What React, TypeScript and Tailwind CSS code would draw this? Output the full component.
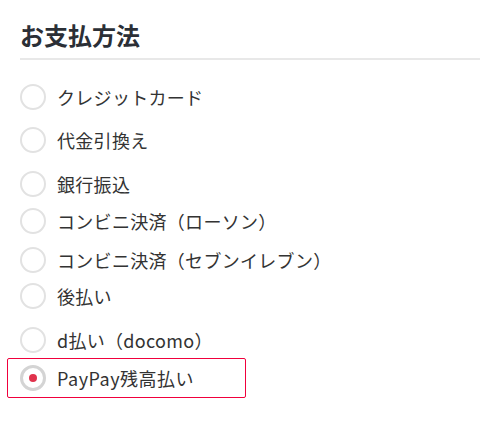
const options = [
  { label: "クレジットカード", mt: "mt-0" },
  { label: "代金引換え", mt: "mt-[17px]" },
  { label: "銀行振込", mt: "mt-[18px]" },
  { label: "コンビニ決済（ローソン）", mt: "mt-[11px]" },
  { label: "コンビニ決済（セブンイレブン）", mt: "mt-[13px]" },
  { label: "後払い", mt: "mt-[10px]" },
  { label: "d払い（docomo）", mt: "mt-[18px]" },
];

export default function App() {
  return (
    <div
      className="w-[500px] h-[430px] bg-white px-5 pt-[19px]"
      style={{ fontFamily: '"Noto Sans CJK JP", "Noto Sans", sans-serif' }}
    >
      <h2 className="text-[24px] leading-[32px] font-bold text-[#2b2f36]">お支払方法</h2>
      <div className="mt-[7px] h-[2px] bg-[#e8e8e8]"></div>

      <div className="pt-[24px]">
        {options.map((o) => (
          <label key={o.label} className={`flex items-center h-[26px] ${o.mt}`}>
            <span className="w-[26px] h-[26px] rounded-full border-2 border-[#e2e2e2] shrink-0"></span>
            <span className="ml-[11px] text-[18px] text-[#333] leading-none whitespace-nowrap tracking-[0.3px]">{o.label}</span>
          </label>
        ))}

        <label className="mt-[5px] -ml-[13px] w-[239px] h-[40px] flex items-center pl-[12px] border border-[#f0003c] rounded-[2px]">
          <span className="w-[26px] h-[26px] rounded-full border-[3px] border-[#d4d4d4] shrink-0 flex items-center justify-center">
            <span className="w-[8px] h-[8px] rounded-full bg-[#e0324c]"></span>
          </span>
          <span className="ml-[11px] text-[18px] text-[#333] leading-none whitespace-nowrap tracking-[0.5px]">PayPay残高払い</span>
        </label>
      </div>
    </div>
  );
}
